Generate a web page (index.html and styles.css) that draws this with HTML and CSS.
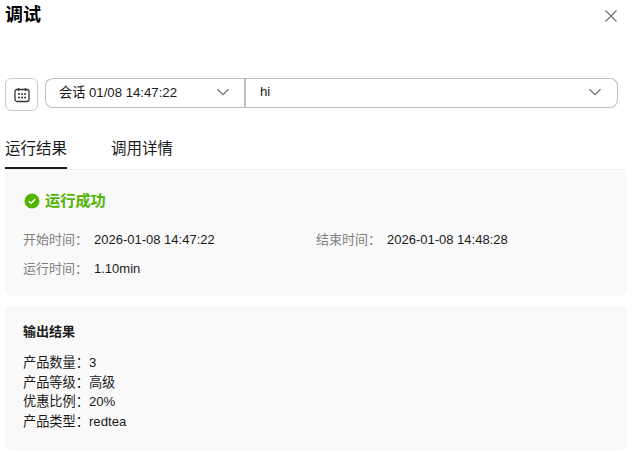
FILE: index.html
```html
<!DOCTYPE html>
<html lang="zh-CN">
    <head>
        <title>调试</title>
        <link rel="stylesheet" href="styles.css">
    </head>
    <body>
        <div class="header">
            <h1 class="title">调试</h1>
            <svg class="close" width="14" height="14" viewBox="0 0 14 14">
                <path d="M1.5 1.5L12.5 12.5M12.5 1.5L1.5 12.5" fill="none" stroke="#6b7280" stroke-width="1.2"/>
            </svg>
        </div>

        <div class="toolbar">
            <button class="calendar">
                <svg width="16" height="16" viewBox="0 0 16 16">
                    <rect x="1" y="2.5" width="14" height="12" rx="2" fill="none" stroke="#333" stroke-width="1.3"/>
                    <path d="M4.5 1V4M11.5 1V4" stroke="#333" stroke-width="1.3"/>
                    <path d="M4 7H6M7 7H9M10 7H12M4 10.5H6M7 10.5H9M10 10.5H12" stroke="#333" stroke-width="1.6"/>
                </svg>
            </button>
            <div class="select select-session">
                <span class="select-text">会话 01/08 14:47:22</span>
                <svg class="chevron" width="14" height="8" viewBox="0 0 14 8">
                    <path d="M1.5 1.2L7 6.6L12.5 1.2" fill="none" stroke="#6b7280" stroke-width="1.3"/>
                </svg>
            </div>
            <div class="select select-input">
                <span class="select-text">hi</span>
                <svg class="chevron" width="14" height="8" viewBox="0 0 14 8">
                    <path d="M1.5 1.2L7 6.6L12.5 1.2" fill="none" stroke="#6b7280" stroke-width="1.3"/>
                </svg>
            </div>
        </div>

        <div class="tabs">
            <span class="tab active">运行结果</span>
            <span class="tab">调用详情</span>
        </div>

        <div class="card card-status">
            <div class="status">
                <svg width="16" height="16" viewBox="0 0 16 16">
                    <circle cx="8" cy="8" r="7.5" fill="#52b300"/>
                    <path d="M4.8 8.2L7.1 10.3L11.2 6" fill="none" stroke="#fff" stroke-width="1.4"/>
                </svg>
                <span>运行成功</span>
            </div>
            <div class="meta">
                <div class="meta-item"><span class="label">开始时间：</span><span>2026-01-08 14:47:22</span></div>
                <div class="meta-item"><span class="label">结束时间：</span><span>2026-01-08 14:48:28</span></div>
                <div class="meta-item"><span class="label">运行时间：</span><span>1.10min</span></div>
            </div>
        </div>

        <div class="card card-output">
            <h2 class="output-title">输出结果</h2>
            <div class="output-line">产品数量：3</div>
            <div class="output-line">产品等级：高级</div>
            <div class="output-line">优惠比例：20%</div>
            <div class="output-line">产品类型：redtea</div>
        </div>
    </body>
</html>
```

FILE: styles.css
```css
body
{
    margin: 0;
    padding: 0 6px 0 5px;
    height: 453px;
    box-sizing: border-box;
    overflow: hidden;
    background-color: #ffffff;
    color: #1a1a1a;
    font-family: "Liberation Sans", "Noto Sans CJK SC", sans-serif;
    font-size: 13px;
}

.header
{
    display: flex;
    justify-content: space-between;
    align-items: flex-start;
    height: 78px;
}

.title
{
    margin: 4px 0 0;
    font-size: 18px;
    line-height: 22px;
    font-weight: 700;
    color: #000000;
}

.close
{
    margin: 9px 9px 0 0;
}

.toolbar
{
    display: flex;
    align-items: flex-start;
    padding-right: 9px;
}

.calendar
{
    display: flex;
    justify-content: center;
    align-items: center;
    width: 33px;
    height: 33px;
    margin-right: 7px;
    padding: 0;
    background: #ffffff;
    border: 1px solid #c9c9c9;
    border-radius: 6px;
}

.select
{
    display: flex;
    justify-content: space-between;
    align-items: center;
    height: 30px;
    box-sizing: border-box;
    border: 1px solid #bfbfbf;
    background: #ffffff;
}

.select-text
{
    margin-bottom: 3px;
    font-size: 13.2px;
}

.select .chevron
{
    margin-bottom: 3px;
}

.select-session
{
    width: 199px;
    padding: 0 14px 0 13px;
    border-radius: 8px 0 0 8px;
    border-right: 0;
}

.select-input
{
    flex: 1;
    padding: 0 15px 0 14px;
    border-radius: 0 8px 8px 0;
    border-left: 2px solid #bfbfbf;
}

.tabs
{
    display: flex;
    gap: 44px;
    height: 56px;
    margin-top: 2px;
    box-sizing: content-box;
    border-bottom: 1px solid #eeeeee;
}

.tab
{
    box-sizing: border-box;
    height: 56px;
    padding-top: 25px;
    font-size: 15.5px;
    line-height: 22px;
}

.tab.active
{
    border-bottom: 2px solid #1a1a1a;
}

.card
{
    margin-top: 1px;
    padding: 20px 18px;
    background-color: #f9f9f9;
    border-radius: 8px;
}

.card-status
{
    height: 125px;
    box-sizing: border-box;
}

.status
{
    display: flex;
    align-items: center;
    gap: 5px;
    padding-left: 1px;
    font-size: 15.2px;
    line-height: 20px;
    font-weight: 700;
    color: #52b300;
}

.meta
{
    display: grid;
    grid-template-columns: 293px 1fr;
    row-gap: 9px;
    margin-top: 19px;
    line-height: 20px;
}

.meta-item .label
{
    display: inline-block;
    width: 71px;
    color: #808080;
}

.card-output
{
    height: 146px;
    box-sizing: border-box;
    margin-top: 9px;
    padding-top: 19px;
}

.output-title
{
    margin: 0 0 14px;
    padding: 0;
    font-size: 13px;
    line-height: 15px;
    font-weight: 700;
}

.output-line
{
    font-size: 13.2px;
    line-height: 19.5px;
}
```
